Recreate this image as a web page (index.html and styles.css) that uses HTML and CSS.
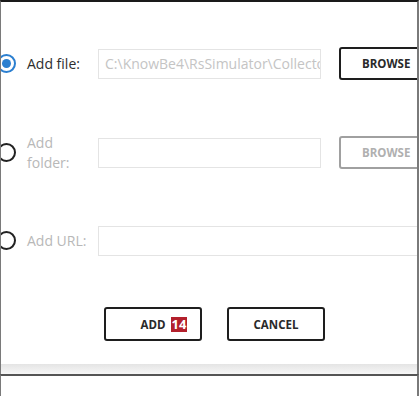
FILE: index.html
```html
<!DOCTYPE html>
<html lang="en">
<head>
  <meta charset="UTF-8">
  <title>Add Source</title>
  <link rel="stylesheet" href="styles.css">
</head>
<body>

<div class="dialog">
  <div class="row row-file">
    <span class="radio checked"></span>
    <label class="label">Add file:</label>
    <div class="field">C:\KnowBe4\RsSimulator\Collector</div>
    <button class="btn browse">BROWSE</button>
  </div>

  <div class="row row-folder">
    <span class="radio"></span>
    <label class="label disabled">Add<br>folder:</label>
    <div class="field"></div>
    <button class="btn browse off">BROWSE</button>
  </div>

  <div class="row row-url">
    <span class="radio"></span>
    <label class="label disabled">Add URL:</label>
    <div class="field wide"></div>
  </div>

  <div class="actions">
    <button class="btn action"><span>ADD</span><span class="badge">14</span></button>
    <button class="btn action">CANCEL</button>
  </div>
</div>

<div class="footer-shade"></div>
<div class="footer"></div>

</body>
</html>
```

FILE: styles.css
```css
body {
  margin: 0;
  width: 419px;
  height: 396px;
  overflow: hidden;
  background: #fff;
  font-family: 'Open Sans', 'Noto Sans', sans-serif;
}

.dialog {
  height: 364px;
  box-sizing: border-box;
  border-top: 2px solid #1a1a1a;
  border-left: 1px solid #7a7a7a;
  border-right: 2px solid #7a7a7a;
  overflow: hidden;
  padding-top: 45px;
}

.row {
  display: flex;
  align-items: center;
  height: 33px;
  white-space: nowrap;
}

.row-folder {
  margin-top: 56px;
}

.row-url {
  margin-top: 55px;
}

.radio {
  flex: none;
  width: 15px;
  height: 15px;
  margin-left: -4px;
  border: 2px solid #222;
  border-radius: 50%;
  position: relative;
}

.radio.checked {
  border-color: #2b7fd0;
}

.radio.checked::after {
  content: "";
  position: absolute;
  left: 3px;
  top: 3px;
  width: 9px;
  height: 9px;
  border-radius: 50%;
  background: #2b7fd0;
}

.label {
  flex: none;
  width: 71px;
  margin-left: 11px;
  font-size: 14px;
  line-height: 20px;
  color: #2e2e2e;
}

.label.disabled {
  color: #b8b8b8;
}

.field {
  flex: none;
  height: 28px;
  border: 1px solid #e4e4e4;
  padding: 0 4px 0 6px;
  width: 211px;
  overflow: hidden;
  font-size: 14px;
  line-height: 28px;
  color: #c4c4c4;
}

.field.wide {
  width: 400px;
}

.btn {
  background: #fff;
  border: 2px solid #1e1e1e;
  border-radius: 3px;
  font-family: 'Open Sans', 'Noto Sans', sans-serif;
  font-weight: bold;
  font-size: 11.5px;
  color: #2a2a2a;
  cursor: pointer;
  padding: 0;
}

.browse {
  flex: none;
  width: 92px;
  height: 33px;
  margin-left: 18px;
  text-align: left;
  padding-left: 21px;
}

.browse.off {
  border-color: #a0a0a0;
  color: #b0b0b0;
}

.actions {
  display: flex;
  gap: 25px;
  padding-left: 103px;
  margin-top: 50px;
}

.action {
  width: 98px;
  height: 34px;
  display: flex;
  align-items: center;
  justify-content: center;
}

.action:first-child {
  padding-left: 22px;
}

.badge {
  margin-left: 5px;
  background: #b3202c;
  color: #fff;
  font-size: 13px;
  line-height: 15px;
  padding: 0 1px;
}

.footer-shade {
  height: 10px;
  border-left: 1px solid #7a7a7a;
  border-right: 2px solid #7a7a7a;
  background: linear-gradient(#e4e4e4, #f7f7f7);
}

.footer {
  height: 20px;
  border-top: 2px solid #555;
  border-bottom: 2px solid #7a7a7a;
  border-left: 1px solid #7a7a7a;
  border-right: 2px solid #7a7a7a;
}
```
